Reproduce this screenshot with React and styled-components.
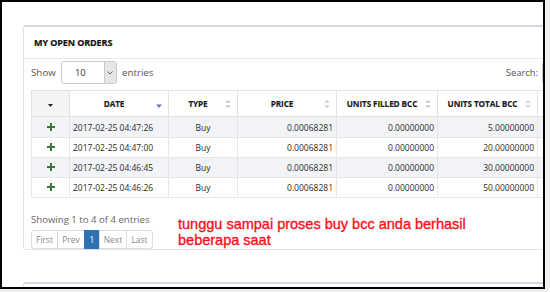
import React from 'react';
import styled, { createGlobalStyle } from 'styled-components';

const Global = createGlobalStyle`
  html, body { margin: 0; padding: 0; background: #f0f0f0; }
  body { font-family: "Open Sans", "Liberation Sans", sans-serif; }
  * { box-sizing: border-box; }
`;

const Frame = styled.div`
  width: 545px;
  height: 289px;
  border: 2px solid #000;
  background: #fff;
  overflow: hidden;
  padding: 23px 0 0 21px;
`;

const Panel = styled.section`
  width: 583px;
  border: 1px solid #dfe3ea;
  border-top: 2px solid #d3d9e4;
  border-radius: 3px;
  background: #fff;
  & + & { margin-top: 32px; height: 120px; }
`;

const Heading = styled.header`
  height: 32px;
  display: flex;
  align-items: center;
  padding: 0 10px;
  border-bottom: 1px solid #e6e8ec;
  font-size: 9px;
  font-weight: 700;
  color: #111;
  letter-spacing: -0.1px;
  -webkit-text-stroke: 0.2px #111;
`;

const Body = styled.div`
  padding: 2px 8px 0 7px;
`;

const Controls = styled.div`
  height: 23px;
  display: flex;
  align-items: center;
  justify-content: space-between;
  margin-bottom: 6px;
  font-size: 9.8px;
  color: #555;
`;

const Length = styled.label`
  display: flex;
  align-items: center;
  gap: 5px;
`;

const Select = styled.div`
  width: 56px;
  height: 23px;
  border: 1px solid #c9c9c9;
  border-radius: 3px;
  display: flex;
  align-items: center;
  justify-content: space-between;
  padding-left: 13px;
  color: #333;
  font-size: 9.5px;
  overflow: hidden;
`;

const Arrow = styled.span`
  width: 12px;
  height: 100%;
  background: #e6e6e6;
  border-left: 1px solid #c9c9c9;
  display: flex;
  align-items: center;
  justify-content: center;
`;

const SearchBox = styled.label`
  display: flex;
  align-items: center;
  gap: 4px;
  font-size: 9.4px;
`;

const SearchInput = styled.span`
  width: 55px;
  height: 23px;
  border: 1px solid #c9c9c9;
  border-radius: 3px;
`;

const Table = styled.table`
  border-collapse: collapse;
  table-layout: fixed;
  width: 566px;
  border: 1px solid #e2e2e2;
`;

const Th = styled.th`
  position: relative;
  height: 26px;
  padding: 0 14px 0 4px;
  border: 1px solid #e2e2e2;
  background: ${p => (p.$shade ? '#f4f4f4' : '#fff')};
  font-size: 8.2px;
  font-weight: 700;
  color: #1a1a1a;
  text-align: center;
  white-space: nowrap;
  letter-spacing: -0.1px;
  -webkit-text-stroke: 0.15px #1a1a1a;
  ${p => p.$plain && 'padding: 0;'}
`;

const Row = styled.tr`
  background: ${p => (p.$striped ? '#f1f3f7' : '#fff')};
`;

const Td = styled.td`
  height: 20px;
  padding: 0 3px;
  border: 1px solid #e6e6e6;
  font-size: 8.5px;
  color: #2a2a2a;
  text-align: ${p => p.$align || 'left'};
  white-space: nowrap;
  ${p => p.$first && 'height: 21px;'}
`;

const SortWrap = styled.span`
  position: absolute;
  right: 6px;
  top: 50%;
  transform: translateY(-50%);
  display: flex;
`;

const Footer = styled.div`
  display: flex;
  align-items: flex-start;
`;

const Info = styled.div`
  width: 147px;
  padding-top: 15px;
`;

const InfoText = styled.div`
  font-size: 9.6px;
  line-height: 14px;
  color: #666;
  white-space: nowrap;
  margin-bottom: 3px;
`;

const Pager = styled.div`
  display: flex;
  height: 19px;
`;

const PageBtn = styled.span`
  width: ${p => p.$w}px;
  height: 19px;
  display: flex;
  align-items: center;
  justify-content: center;
  font-size: 8.4px;
  border: 1px solid #dcdcdc;
  margin-left: -1px;
  &:first-child { margin-left: 0; border-radius: 3px 0 0 3px; }
  &:last-child { border-radius: 0 3px 3px 0; }
  color: ${p => (p.$active ? '#fff' : '#888')};
  background: ${p => (p.$active ? '#2f72b4' : '#fff')};
  border-color: ${p => (p.$active ? '#2f72b4' : '#dcdcdc')};
  position: relative;
`;

const Note = styled.div`
  margin-top: 18px;
  font-family: "Liberation Sans", Arial, sans-serif;
  font-size: 14.5px;
  line-height: 16px;
  color: #f2141c;
  -webkit-text-stroke: 0.35px #f2141c;
`;

const SortIcon = ({ dir }) => (
  <SortWrap>
    <svg width="6" height="9" viewBox="0 0 6 9">
      {dir === 'desc' ? (
        <path d="M0 5h6L3 8.5z" fill="#6f70d6" />
      ) : (
        <g fill="#d6d6d6">
          <path d="M0 3.6h6L3 0z" />
          <path d="M0 5.4h6L3 9z" />
        </g>
      )}
    </svg>
  </SortWrap>
);

const Plus = () => (
  <svg width="8" height="8" viewBox="0 0 8 8">
    <path d="M3 0h2v3h3v2H5v3H3V5H0V3h3z" fill="#3a7a36" />
  </svg>
);

const Caret = () => (
  <svg width="5" height="3" viewBox="0 0 5 3">
    <path d="M0 0h5L2.5 3z" fill="#222" />
  </svg>
);

const Chevron = () => (
  <svg width="6" height="4" viewBox="0 0 6 4">
    <path d="M0.5 0.5L3 3l2.5-2.5" fill="none" stroke="#555" strokeWidth="0.9" />
  </svg>
);

const orders = [
  ['2017-02-25 04:47:26', '5.00000000'],
  ['2017-02-25 04:47:00', '20.00000000'],
  ['2017-02-25 04:46:45', '30.00000000'],
  ['2017-02-25 04:46:26', '50.00000000'],
];

const cols = [38, 99, 69, 99, 101, 100, 60];

export default function App() {
  return (
    <>
      <Global />
      <Frame>
        <Panel>
          <Heading>MY OPEN ORDERS</Heading>
          <Body>
            <Controls>
              <Length>
                Show
                <Select>
                  10
                  <Arrow><Chevron /></Arrow>
                </Select>
                entries
              </Length>
              <SearchBox>
                Search:
                <SearchInput />
              </SearchBox>
            </Controls>
            <Table>
              <colgroup>
                {cols.map((w, i) => <col key={i} style={{ width: w }} />)}
              </colgroup>
              <thead>
                <tr>
                  <Th $shade $plain><Caret /></Th>
                  <Th>DATE<SortIcon dir="desc" /></Th>
                  <Th>TYPE<SortIcon /></Th>
                  <Th>PRICE<SortIcon /></Th>
                  <Th>UNITS FILLED BCC<SortIcon /></Th>
                  <Th>UNITS TOTAL BCC<SortIcon /></Th>
                  <Th></Th>
                </tr>
              </thead>
              <tbody>
                {orders.map(([date, total], i) => (
                  <Row key={date} $striped={i % 2 === 0}>
                    <Td $align="center" $first={i === 0}><Plus /></Td>
                    <Td>{date}</Td>
                    <Td $align="center">Buy</Td>
                    <Td $align="right">0.00068281</Td>
                    <Td $align="right">0.00000000</Td>
                    <Td $align="right">{total}</Td>
                    <Td></Td>
                  </Row>
                ))}
              </tbody>
            </Table>
            <Footer>
              <Info>
                <InfoText>Showing 1 to 4 of 4 entries</InfoText>
                <Pager>
                  <PageBtn $w={27}>First</PageBtn>
                  <PageBtn $w={28}>Prev</PageBtn>
                  <PageBtn $w={16} $active>1</PageBtn>
                  <PageBtn $w={28}>Next</PageBtn>
                  <PageBtn $w={27}>Last</PageBtn>
                </Pager>
              </Info>
              <Note>
                tunggu sampai proses buy bcc anda berhasil
                <br />
                beberapa saat
              </Note>
            </Footer>
          </Body>
        </Panel>
        <Panel />
      </Frame>
    </>
  );
}
